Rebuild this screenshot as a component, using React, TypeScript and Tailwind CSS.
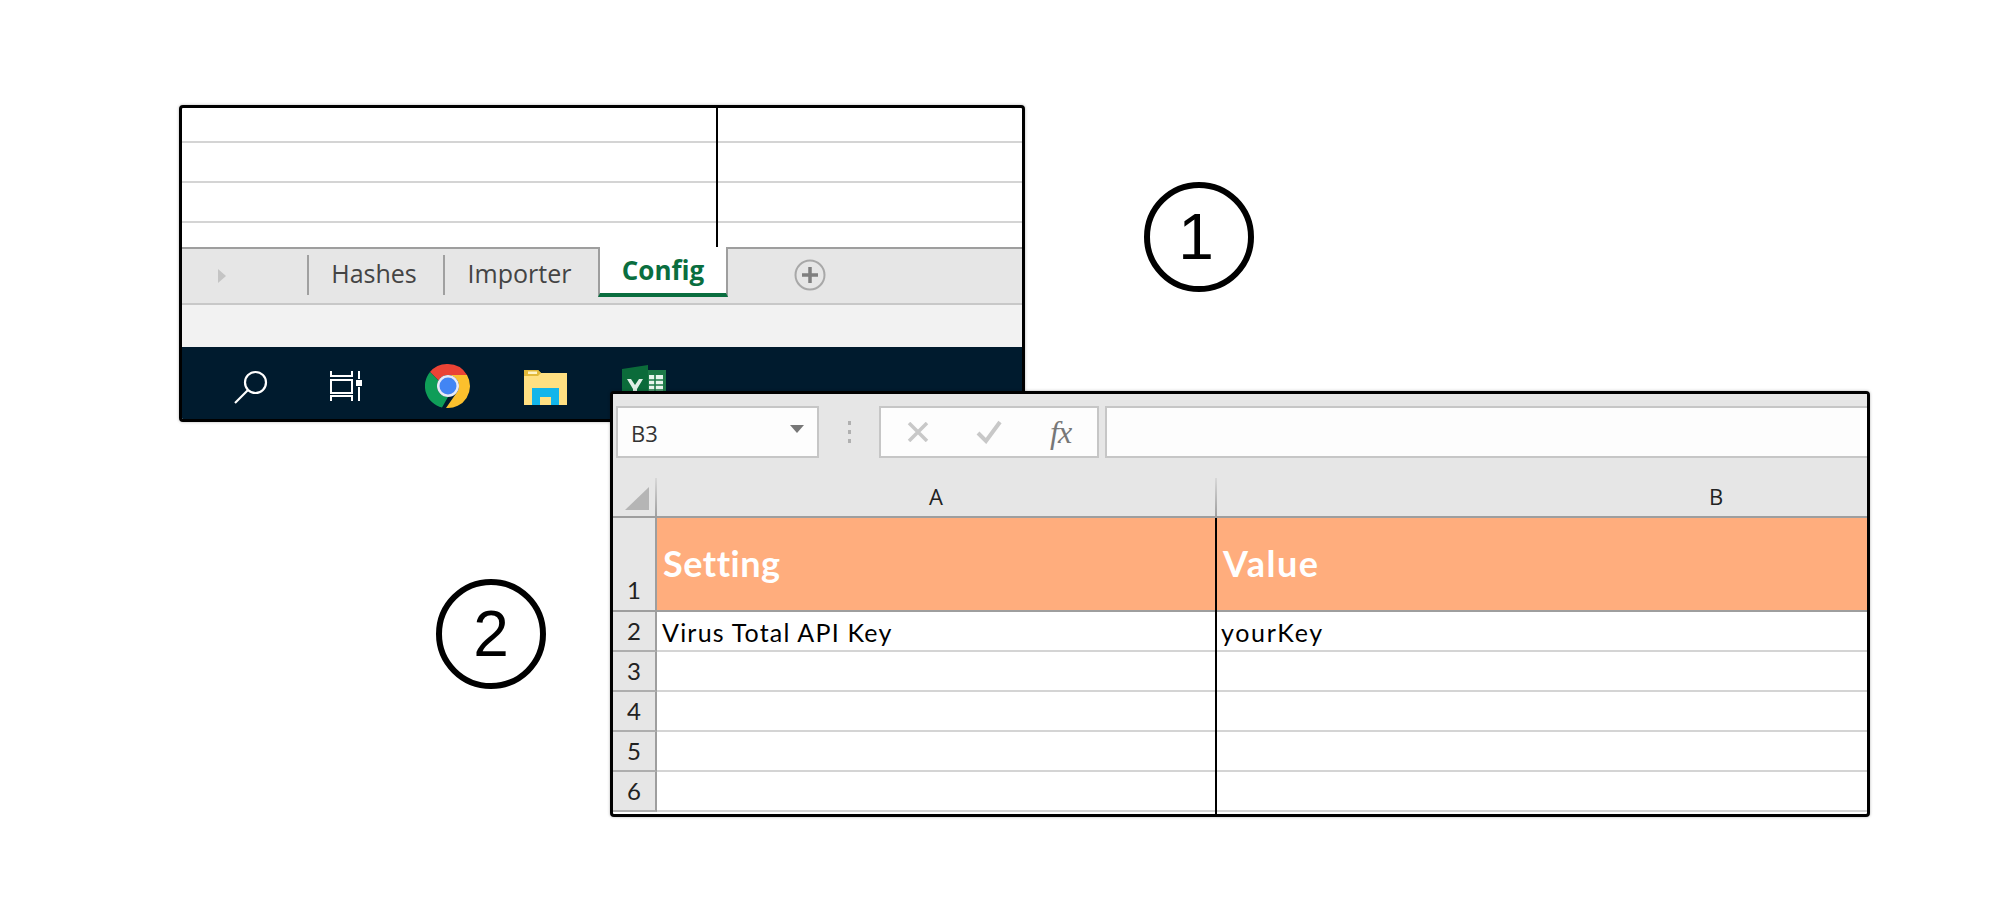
const rowText = "font-['Lato','Liberation_Sans',sans-serif] text-[25px] leading-none tracking-[1.2px] text-black";
const headText = "font-['Lato','Liberation_Sans',sans-serif] text-[36px] font-bold leading-none text-white";
const colLabel = "flex shrink-0 items-center justify-center pb-[2px] font-['Open_Sans',sans-serif] text-[22px] leading-none text-[#222]";

function SearchIcon() {
  return (
    <svg width="36" height="36" viewBox="0 0 36 36" fill="none" stroke="#fff" strokeWidth="2.2">
      <circle cx="22.5" cy="13.5" r="10.5" />
      <path d="M15 21 L2 34" />
    </svg>
  );
}

function TaskViewIcon() {
  return (
    <svg width="33" height="30" viewBox="0 0 33 30" fill="none" stroke="#fff" strokeWidth="2">
      <path d="M1 0v5h21V0" />
      <rect x="1" y="9" width="21" height="13" />
      <path d="M1 30v-5h21v5" />
      <path d="M29 0v8M29 16v14" />
      <rect x="26" y="9" width="6" height="6" fill="#fff" stroke="none" />
    </svg>
  );
}

function ChromeIcon() {
  return (
    <svg width="46" height="46" viewBox="0 0 46 46">
      <path d="M23 1A22 22 0 0 1 42 12H23A11 11 0 0 0 13.5 17.5L5 9A22 22 0 0 1 23 1Z" fill="#ea4335" />
      <path d="M5 9L13.5 17.5A11 11 0 0 0 23 34L17 44.5A22 22 0 0 1 5 9Z" fill="#0f9d58" />
      <path d="M42 12A22 22 0 0 1 21 45L32.5 28.5A11 11 0 0 0 23 12Z" fill="#fbc02d" />
      <circle cx="23" cy="23" r="11" fill="#e8eaf6" />
      <circle cx="23" cy="23" r="8.5" fill="#4285f4" />
    </svg>
  );
}

function FolderIcon() {
  return (
    <svg width="44" height="36" viewBox="0 0 44 36">
      <path d="M0 1h14l3 3h26v32H0Z" fill="#ffe082" />
      <path d="M0 1h14l3 3 -3 3H0Z" fill="#e2b93b" />
      <rect x="4" y="2.500" width="9" height="2.500" fill="#fff3c4" />
      <path d="M8 36V19h27v17h-8v-8H16v8Z" fill="#12b5ea" />
      <path d="M16 28h11v8H16Z" fill="#ffe082" />
    </svg>
  );
}

function ExcelIcon() {
  return (
    <svg width="44" height="38" viewBox="0 0 44 38">
      <rect x="24" y="5" width="20" height="33" fill="#1d7a48" />
      <path d="M27 10h14v24H27Z" fill="#e8f5ee" />
      <path d="M27 15h14M27 20h14M27 25h14M27 30h14M33 10v24" stroke="#1d7a48" strokeWidth="1.6" />
      <path d="M0 4L26 0V38H0Z" fill="#0b6b3a" />
      <path d="M5 14h4l4 6 4-6h4l-6 10v10h-4V24Z" fill="#dfeee6" />
    </svg>
  );
}

function PlusIcon() {
  return (
    <svg width="32" height="32" viewBox="0 0 32 32" fill="none">
      <circle cx="16" cy="16" r="14.500" stroke="#a8a8a8" strokeWidth="2" />
      <path d="M16 8v16M8 16h16" stroke="#7f7f7f" strokeWidth="3.500" />
    </svg>
  );
}

function TabsWindow() {
  return (
    <div className="absolute left-[179px] top-[105px] flex h-[317px] w-[846px] flex-col overflow-hidden rounded-[4px] border-[3px] border-black bg-white shadow-[0_0_3px_rgba(0,0,0,0.3)]">
      <div className="h-[35px] border-b-2 border-[#d4d4d4]" />
      <div className="h-[40px] border-b-2 border-[#d4d4d4]" />
      <div className="h-[40px] border-b-2 border-[#d4d4d4]" />
      <div className="h-[24px]" />
      {/* resize guide over the grid */}
      <div className="absolute left-[534px] top-0 h-[139px] w-[2px] bg-black" />

      <div className="flex h-[58px] border-y-2 border-t-[#9e9e9e] border-b-[#c8c8c8] bg-[#e6e6e6] font-['Open_Sans',sans-serif] text-[25px] leading-none text-[#444]">
        <div className="flex w-[125px] items-center pl-[36px]">
          <div className="h-0 w-0 border-y-[7px] border-l-[8px] border-y-transparent border-l-[#c4c4c4]" />
        </div>
        <div className="mt-[6px] flex h-[40px] w-[136px] items-center justify-center border-l-2 border-[#a0a0a0] pb-[3px] pr-[4px]">Hashes</div>
        <div className="mt-[6px] flex h-[40px] w-[155px] items-center justify-center border-l-2 border-[#a0a0a0] pb-[3px] pr-[4px]">Importer</div>
        <div className="-mt-[2px] flex h-[50px] w-[130px] items-center justify-center border-x-2 border-b-4 border-x-[#9e9e9e] border-b-[#0a6e3f] bg-white pb-[1px] text-[26px] font-bold text-[#0a6e3f]">Config</div>
        <div className="ml-[66px] mt-[10px]">
          <PlusIcon />
        </div>
      </div>

      <div className="h-[42px] bg-[#f2f2f2]" />

      <div className="flex h-[72px] items-start bg-[#001b2e]">
        <div className="ml-[51px] mt-[22px]"><SearchIcon /></div>
        <div className="ml-[61px] mt-[24px]"><TaskViewIcon /></div>
        <div className="ml-[62px] mt-[16px]"><ChromeIcon /></div>
        <div className="ml-[53px] mt-[22px]"><FolderIcon /></div>
        <div className="ml-[54px] mt-[18px]"><ExcelIcon /></div>
      </div>
    </div>
  );
}

function FormulaBar() {
  return (
    <div className="flex h-[64px] items-start bg-[#e6e6e6] pl-[3px] pt-[12px]">
      <div className="flex h-[52px] w-[203px] items-center justify-between border-2 border-[#c6c6c6] bg-[#fdfdfd] pl-[13px] pr-[13px]">
        <span className="pt-[2px] font-['Open_Sans',sans-serif] text-[22px] leading-none text-[#333]">B3</span>
        <div className="mb-[6px] h-0 w-0 border-x-[7px] border-t-[8px] border-x-transparent border-t-[#777]" />
      </div>
      <div className="ml-[29px] mr-[28px] flex h-[52px] flex-col items-center justify-center gap-[5px]">
        <div className="h-[4px] w-[3px] bg-[#b0b0b0]" />
        <div className="h-[4px] w-[3px] bg-[#b0b0b0]" />
        <div className="h-[4px] w-[3px] bg-[#b0b0b0]" />
      </div>
      <div className="flex h-[52px] w-[220px] items-center border-2 border-[#c6c6c6] bg-[#fdfdfd]">
        <svg className="ml-[26px]" width="22" height="20" viewBox="0 0 22 20" fill="none" stroke="#c8c8c8" strokeWidth="3.500">
          <path d="M2 1L20 19M20 1L2 19" />
        </svg>
        <svg className="ml-[47px]" width="26" height="24" viewBox="0 0 26 24" fill="none" stroke="#c8c8c8" strokeWidth="4">
          <path d="M2 13L10 21L24 2" />
        </svg>
        <span className="ml-[48px] font-['Liberation_Serif',serif] text-[32px] italic leading-none tracking-[-1px] text-[#777]">fx</span>
      </div>
      <div className="ml-[6px] h-[52px] flex-1 border-y-2 border-l-2 border-[#c6c6c6] bg-[#fdfdfd]" />
    </div>
  );
}

function ColumnHeader() {
  return (
    <div className="flex h-[60px] border-b-2 border-[#9e9e9e] bg-[#e6e6e6]">
      <div className="flex w-[42px] shrink-0 items-end justify-end pb-[6px] pr-[6px]">
        <svg width="24" height="23" viewBox="0 0 24 23">
          <path d="M24 0V23H0Z" fill="#b5b5b5" />
        </svg>
      </div>
      <div className="mt-[20px] w-[2px] shrink-0 bg-gradient-to-b from-[#d8d8d8] to-[#a0a0a0]" />
      <div className={`mt-[20px] w-[558px] ${colLabel}`}>A</div>
      <div className="mt-[20px] w-[2px] shrink-0 bg-gradient-to-b from-[#d8d8d8] to-[#a0a0a0]" />
      <div className={`mt-[20px] w-[998px] ${colLabel}`}>B</div>
    </div>
  );
}

function SheetRow({ n, a, b }: { n: number; a?: string; b?: string }) {
  return (
    <div className="flex h-[40px]">
      <div className="flex w-[44px] shrink-0 items-center justify-center border-r-2 border-b-2 border-r-[#9e9e9e] border-b-[#aeaeae] bg-[#e6e6e6] font-['Lato',sans-serif] text-[24px] leading-none text-[#222]">{n}</div>
      <div className={`flex w-[558px] shrink-0 items-center border-b-2 border-[#d4d4d4] pl-[5px] pt-[3px] ${rowText}`}>{a}</div>
      <div className={`flex flex-1 items-center border-b-2 border-[#d4d4d4] pl-[6px] pt-[3px] ${rowText} tracking-[1.7px]`}>{b}</div>
    </div>
  );
}

function SheetWindow() {
  return (
    <div className="absolute left-[610px] top-[391px] flex h-[426px] w-[1260px] flex-col overflow-hidden rounded-[4px] border-[3px] border-black bg-white shadow-[0_0_3px_rgba(0,0,0,0.3)]">
      <FormulaBar />
      <ColumnHeader />
      <div className="flex h-[94px]">
        <div className="flex w-[44px] shrink-0 items-end justify-center border-r-2 border-b-2 border-[#9e9e9e] bg-[#e6e6e6] pb-[8px] font-['Lato',sans-serif] text-[24px] leading-none text-[#222]">1</div>
        <div className={`flex w-[558px] shrink-0 items-center border-b-2 border-[#9e9e9e] bg-[#ffad7d] pb-[2px] pl-[6px] tracking-[0.5px] ${headText}`}>Setting</div>
        <div className={`flex flex-1 items-center border-b-2 border-[#9e9e9e] bg-[#ffad7d] pb-[2px] pl-[8px] tracking-[1.5px] ${headText}`}>Value</div>
      </div>
      <SheetRow n={2} a="Virus Total API Key" b="yourKey" />
      <SheetRow n={3} />
      <SheetRow n={4} />
      <SheetRow n={5} />
      <SheetRow n={6} />
      {/* resize guide over the grid */}
      <div className="absolute left-[602px] top-[124px] bottom-0 w-[2px] bg-black" />
    </div>
  );
}

function Callout({ n, className }: { n: number; className: string }) {
  return (
    <div className={`absolute flex h-[110px] w-[110px] items-center justify-center rounded-full border-[6.5px] border-black bg-white font-['Liberation_Sans',sans-serif] text-[64px] leading-none text-black ${className}`}>
      {n}
    </div>
  );
}

export default function App() {
  return (
    <div className="relative h-[900px] w-[2000px] overflow-hidden bg-white">
      <TabsWindow />
      <SheetWindow />
      <Callout n={1} className="left-[1144px] top-[182px] pr-[6px]" />
      <Callout n={2} className="left-[436px] top-[579px]" />
    </div>
  );
}
